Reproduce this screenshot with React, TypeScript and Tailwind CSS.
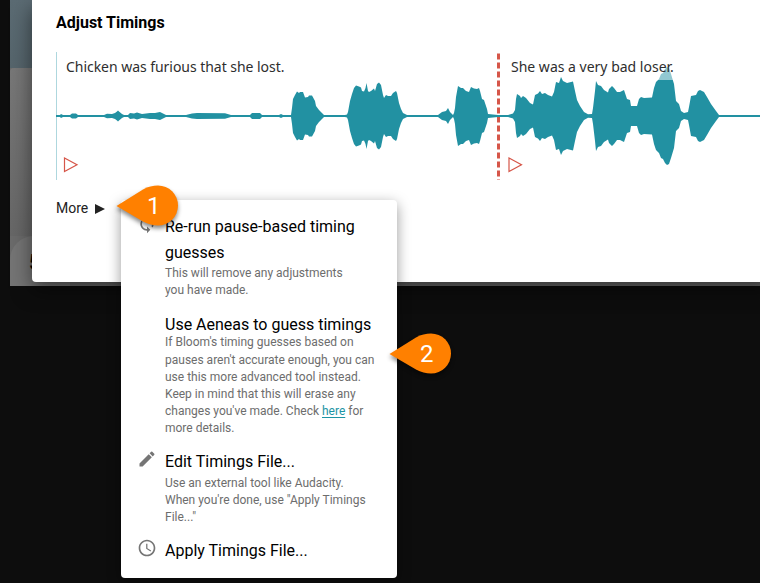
import React from "react";

const envelope: [number, number][] = [
  [56, 1], [60, 1], [61, 2], [63, 1], [70, 1], [72, 2.6], [76, 2.6], [78, 1], [104, 1], [107, 2.2], [112, 2], [115, 3],
  [117, 4.6], [118, 5.5], [119, 4.5], [122, 2], [124, 1], [128, 1], [130, 3], [134, 2.4], [137, 3.5], [142, 2], [150, 3], [155, 3], [160, 4],
  [162, 3], [166, 1], [186, 1], [192, 2.4], [197, 3], [225, 2.8], [231, 1], [250, 1], [252, 3], [260, 3], [262, 1], [279, 1],
  [281, 2], [283, 1], [291, 1], [292, 8], [293, 17], [295, 21], [297, 24.6], [299, 23], [300, 24], [303, 24], [305, 18.5],
  [308, 19], [309, 20.5], [312, 20.5], [315, 15], [316, 10], [319, 6], [324, 1], [345, 1], [347, 1.5], [348, 4], [350, 15],
  [352, 22], [354, 28], [356, 30.5], [359, 29.5], [361, 28.5], [362, 25], [364, 24.5], [365.5, 28], [366.5, 33], [368, 25], [369, 24], [371, 25], [374, 27.5], [375, 25],
  [377, 32], [379, 33.5], [381, 31], [383, 21], [384, 18], [386, 21], [388, 20], [391, 20], [393, 23], [396, 25], [397, 23], [399, 13],
  [401, 7], [403, 3], [407, 1], [438, 1], [442, 4], [446, 5], [448, 8], [450, 4], [453, 1], [454, 3], [455, 8], [456, 19], [458, 30],
  [461, 28], [463, 28], [466, 25], [469, 24], [471, 29], [474, 27.5], [477, 27], [479, 28], [480, 25], [482, 17], [484, 16],
  [487, 7], [488, 2], [498, 1], [508, 1], [513, 2.5], [515, 6], [516, 17], [517, 22], [520, 20], [521, 18], [523, 20], [526, 18],
  [530, 13], [533, 11.5], [535, 21], [538, 22.5], [540, 25], [542, 22], [545, 23], [548, 21], [552, 19.5], [554, 24], [556, 34],
  [559, 33], [561, 39], [563, 35], [567, 33], [573, 34.5], [575, 25], [577, 16], [580, 10], [584, 4], [588, 1.8], [592, 2],
  [593, 8], [595, 25], [596, 35], [598, 31], [601, 30], [604, 26], [608, 23.5], [609, 27], [612, 30], [614, 28], [617, 24],
  [620, 24], [624, 26], [626, 20], [627, 17], [630, 16], [631, 10], [637, 10], [639, 17], [641, 19], [644, 18], [652, 18.5],
  [654, 28], [656, 34], [659, 37], [661, 42], [663, 43], [665, 47], [667, 49], [669, 48], [671, 42], [674, 32], [676, 15],
  [679, 12], [681, 5], [684, 3], [688, 4], [689, 9], [691, 20], [696, 21], [698, 25], [700, 26], [704, 24], [707, 19], [711, 12],
  [716, 5], [719, 1], [760, 1],
];

const outline = [
  ...envelope.map(([x, h]) => `${x - 56},${64 - h}`),
  ...[...envelope].reverse().map(([x, h]) => `${x - 56},${64 + h}`),
].join(" ");

function Waveform() {
  return (
    <svg className="block" width="704" height="130" viewBox="0 0 704 130">
      <path d="M.5 0V128" stroke="#aed7de" strokeWidth="1" />
      <path d="M442.5 1.500V128" stroke="#d65649" strokeWidth="3" strokeDasharray="6 3" />
      <polygon points={outline} fill="#2291a2" />
      <rect x="597" y="13" width="24" height="15" fill="#fff" fillOpacity=".5" />
      <path d="M8.500 106v13.500l12.500-6.800zM453 106v13.500l12.500-6.800z" fill="none" stroke="#d65649" strokeWidth="1.200" />
    </svg>
  );
}

function Callout({ label }: { label: string }) {
  return (
    <div className="relative h-[42px] w-[64px]">
      <svg
        className="block overflow-visible drop-shadow-[0px_3px_2px_rgba(0,0,0,0.45)]"
        width="64"
        height="42"
        viewBox="0 0 64 42"
      >
        <path d="M.5 21 27 4.500C32 1.500 37 .5 42 .5a20 20 0 0 1 0 40C37 40.500 32 39 27 36.500Z" fill="#ff8000" />
      </svg>
      <span className="absolute left-[31px] top-[8px] text-[24px] leading-[26px] text-white">{label}</span>
    </div>
  );
}

function MenuItem({ icon, title, children }: { icon?: React.ReactNode; title: string; children?: React.ReactNode }) {
  return (
    <div className="flex">
      <div className="w-[28px] shrink-0">{icon}</div>
      <div>
        <div className="text-[16px] leading-[26px] text-black">{title}</div>
        {children}
      </div>
    </div>
  );
}

const iconClass = "block size-5 fill-[#757575]";

export default function App() {
  return (
    <div className="relative h-[583px] w-[760px] overflow-hidden bg-[#0d0d0d] font-[Roboto,sans-serif]">
      <div className="ml-[10px] h-[286px] overflow-hidden bg-[#6a6a6a]">
        <div className="h-[68px] w-[22px] bg-linear-to-b from-[#5b6b73] to-[#55646b]" />
        <div className="h-[168px] w-[22px] rounded-tl-[4px] bg-linear-to-b from-[#777] to-[#666]" />
        <div className="h-[50px] w-[60px] rounded-tl-[24px] bg-[#747474] pl-[19px] pt-[14px] text-[22px] font-bold leading-[26px] text-black">5</div>
      </div>

      <div className="absolute left-[32px] top-0 h-[282px] w-[740px] rounded-bl-[4px] bg-white pl-[24px] shadow-[0_8px_20px_rgba(0,0,0,0.5)]">
        <h1 className="pt-[11px] text-[16px] font-bold leading-[24px] text-black">Adjust Timings</h1>
        <div className="relative mt-[17px]">
          <Waveform />
          <span className="absolute left-[10px] top-[4px] whitespace-nowrap font-['Noto_Sans',sans-serif] text-[14px] leading-[22px] tracking-[-0.04px] text-[#2e2e2e]">
            Chicken was furious that she lost.
          </span>
          <span className="absolute left-[455px] top-[4px] whitespace-nowrap font-['Noto_Sans',sans-serif] text-[14px] leading-[22px] text-[#2e2e2e]">
            She was a very bad loser.
          </span>
        </div>
        <div className="mt-[16px] flex items-center gap-[7px] text-[14px] leading-[20px] text-[#222]">
          More
          <svg className="mt-px" width="10" height="10" viewBox="0 0 10 10"><path d="M0 0 10 5 0 10z" fill="#222" /></svg>
        </div>
      </div>

      <div className="absolute left-[121px] top-[200px] flex h-[378px] w-[276px] flex-col rounded-[4px] bg-white pl-[16px] pt-[14px] text-[12px] leading-[17.2px] text-[#6d6d6d] shadow-[0_4px_14px_rgba(0,0,0,0.4)]">
        <MenuItem
          title="Re-run pause-based timing guesses"
          icon={
            <svg className={iconClass} viewBox="0 0 24 24">
              <path d="M12 4V1L8 5l4 4V6c3.310 0 6 2.690 6 6 0 1.010-.25 1.970-.7 2.800l1.460 1.460C19.540 15.030 20 13.570 20 12c0-4.420-3.580-8-8-8m0 14c-3.310 0-6-2.690-6-6 0-1.010.25-1.970.7-2.800L5.240 7.740C4.460 8.970 4 10.430 4 12c0 4.420 3.580 8 8 8v3l4-4-4-4z" />
            </svg>
          }
        >
          <p className="-mt-px">This will remove any adjustments<br />you have made.</p>
        </MenuItem>
        <div className="mt-[13px]">
          <MenuItem title="Use Aeneas to guess timings">
            <p className="mt-[-4px] whitespace-nowrap">
              If Bloom's timing guesses based on<br />pauses aren't accurate enough, you can<br />
              use this more advanced tool instead.<br />Keep in mind that this will erase any<br />
              changes you've made. Check <a className="text-[#1d94a4] underline underline-offset-2">here</a> for<br />more details.
            </p>
          </MenuItem>
        </div>
        <div className="mt-[11px]">
          <MenuItem
            title="Edit Timings File..."
            icon={
              <svg className={iconClass} viewBox="0 0 24 24">
                <path d="M3 17.250V21h3.750L17.810 9.940l-3.750-3.750zM20.710 7.040a1 1 0 0 0 0-1.410l-2.340-2.340a1 1 0 0 0-1.410 0l-1.830 1.830 3.750 3.750z" />
              </svg>
            }
          >
            <p className="whitespace-nowrap">Use an external tool like Audacity.<br />When you're done, use "Apply Timings<br />File..."</p>
          </MenuItem>
        </div>
        <div className="mt-[12px]">
          <MenuItem
            title="Apply Timings File..."
            icon={
              <svg className={iconClass} viewBox="0 0 24 24">
                <path d="M11.990 2C6.470 2 2 6.480 2 12s4.470 10 9.990 10C17.520 22 22 17.520 22 12S17.520 2 11.990 2M12 20c-4.420 0-8-3.580-8-8s3.580-8 8-8 8 3.580 8 8-3.580 8-8 8m.5-13H11v6l5.250 3.150.75-1.230-4.500-2.670z" />
              </svg>
            }
          />
        </div>
      </div>

      <div className="absolute left-[116px] top-[185px]"><Callout label="1" /></div>
      <div className="absolute left-[389px] top-[333px]"><Callout label="2" /></div>
    </div>
  );
}
